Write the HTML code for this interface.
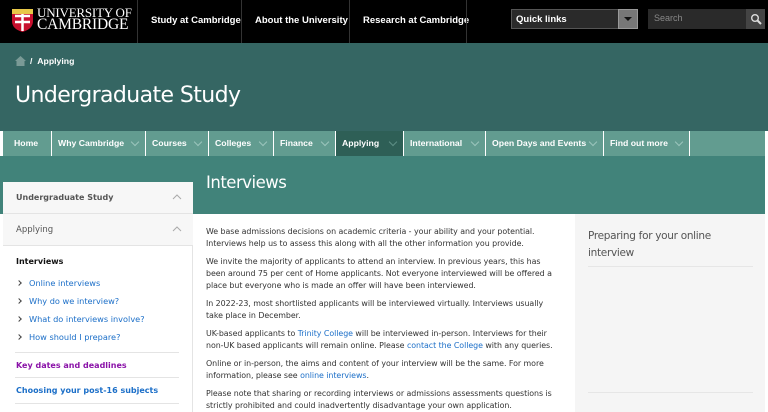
<!DOCTYPE html>
<html><head><meta charset="utf-8"><style>
*{margin:0;padding:0;box-sizing:border-box}
body{width:768px;height:412px;overflow:hidden;background:#fff;font-family:"DejaVu Sans",Verdana,sans-serif;position:relative}
.a{position:absolute}
.hdr{left:0;top:0;width:768px;height:43px;background:#000}
.tn{color:#fff;font:bold 9.5px "Liberation Sans",sans-serif;top:15px}
.sep{top:0;width:1px;height:43px;background:#333}
.band{left:0;top:43px;width:768px;height:88px;background:#356663}
.nav{top:131px;height:25px;background:#629c90;color:#fff;font:bold 8.7px "Liberation Sans",sans-serif;line-height:25px;padding-left:6px}
.nav .c{position:absolute;right:7px;top:8px;width:6px;height:6px;border-right:1px solid #9cc5bc;border-bottom:1px solid #9cc5bc;transform:rotate(45deg)}
.p{font-size:7.9px;color:#333;line-height:11.8px;white-space:nowrap;left:206px;letter-spacing:-0.05px}
.p a{color:#1c6fc8;text-decoration:none}
.sl{font-size:8.2px;white-space:nowrap}
.hr{left:15px;width:164px;height:1px;background:#e4e4e4}
.ch{display:inline-block;width:4px;height:4px;border-right:1px solid #444;border-top:1px solid #444;transform:rotate(45deg);margin:0 8px 1px 1px}
</style></head><body>
<div class="a hdr"></div>
<svg class="a" style="left:12px;top:9px" width="21" height="23" viewBox="0 0 21 23"><path d="M0 0H21V12Q21 20 10.5 23Q0 20 0 12Z" fill="#c8102e"/><rect x="0" y="0" width="21" height="5" fill="#e8c848"/><path d="M3 7H18M10.5 5V22M3 13H18" stroke="#fff" stroke-width="2.5"/></svg>
<div class="a" style="left:37px;top:7px;color:#fff;font:13px 'Liberation Serif',serif;line-height:12px;letter-spacing:-0.2px">UNIVERSITY OF<br><span style="font-size:15.5px">CAMBRIDGE</span></div>
<div class="a sep" style="left:137px"></div>
<div class="a tn" style="left:151px">Study at Cambridge</div>
<div class="a sep" style="left:241px"></div>
<div class="a tn" style="left:255px">About the University</div>
<div class="a sep" style="left:349px"></div>
<div class="a tn" style="left:363px">Research at Cambridge</div>
<div class="a sep" style="left:466px"></div>
<div class="a" style="left:511px;top:9px;width:123px;height:20px;background:#2a2a2a;border:1px solid #555"></div>
<div class="a tn" style="left:516px;top:14px">Quick links</div>
<div class="a" style="left:618px;top:9px;width:20px;height:20px;background:#777;border:1px solid #999"></div>
<div class="a" style="left:624px;top:17px;border-left:4px solid transparent;border-right:4px solid transparent;border-top:4px solid #111"></div>
<div class="a" style="left:648px;top:9px;width:117px;height:20px;background:#2a2a2a"></div>
<div class="a" style="left:654px;top:13px;color:#888;font:9px 'Liberation Sans',sans-serif">Search</div>
<div class="a" style="left:746px;top:9px;width:19px;height:20px;background:#444"></div>
<svg class="a" style="left:750px;top:13px" width="12" height="12"><circle cx="5" cy="5" r="3.3" stroke="#ddd" stroke-width="1.4" fill="none"/><path d="M7.5 7.5L11 11" stroke="#ddd" stroke-width="2"/></svg>
<div class="a band"></div>
<svg class="a" style="left:15px;top:56px" width="11" height="10"><path d="M5.5 0L11 5H9.5V10H1.5V5H0Z" fill="#7a9a96"/></svg>
<div class="a" style="left:30px;top:56px;color:#fff;font:bold 8.7px 'Liberation Sans',sans-serif">/ &nbsp;Applying</div>
<div class="a" style="left:15px;top:83px;color:#fff;font:22px 'DejaVu Sans',sans-serif;letter-spacing:-0.6px">Undergraduate Study</div>
<div class="a nav" style="left:3px;width:48px;padding-left:11px">Home</div>
<div class="a nav" style="left:52px;width:93px">Why Cambridge<i class="c"></i></div>
<div class="a nav" style="left:146px;width:62px">Courses<i class="c"></i></div>
<div class="a nav" style="left:209px;width:64px">Colleges<i class="c"></i></div>
<div class="a nav" style="left:274px;width:61px">Finance<i class="c"></i></div>
<div class="a nav" style="left:336px;width:67px;background:#2e5f56">Applying<i class="c" style="border-color:#5e8f86"></i></div>
<div class="a nav" style="left:404px;width:81px">International<i class="c"></i></div>
<div class="a nav" style="left:486px;width:117px">Open Days and Events<i class="c"></i></div>
<div class="a nav" style="left:604px;width:85px">Find out more<i class="c"></i></div>
<div class="a nav" style="left:690px;width:75px"></div>
<div class="a" style="left:0;top:156px;width:765px;height:58px;background:#41837a"></div>
<div class="a" style="left:206px;top:173px;color:#fff;font:16.5px 'DejaVu Sans',sans-serif;letter-spacing:-0.5px">Interviews</div>
<div class="a" style="left:575px;top:214px;width:190px;height:198px;background:#f5f5f5"></div>
<div class="a" style="left:588px;top:228px;color:#555;font-size:10.5px;line-height:16.5px;letter-spacing:-0.3px">Preparing for your online<br>interview</div>
<div class="a" style="left:588px;top:266px;width:165px;height:1px;background:#e6e6e6"></div>
<div class="a" style="left:588px;top:392px;width:165px;height:1px;background:#e6e6e6"></div>
<!-- sidebar -->
<div class="a" style="left:3px;top:182px;width:190px;height:230px;background:#fff;border-right:1px solid #e4e4e4"></div>
<div class="a" style="left:3px;top:182px;width:190px;height:32px;background:#f7f7f7;border-bottom:1px solid #e4e4e4"></div>
<div class="a" style="left:3px;top:214px;width:190px;height:32px;background:#f7f7f7;border-bottom:1px solid #e4e4e4"></div>
<div class="a sl" style="left:16px;top:193px;color:#555;font-weight:bold;font-size:8px">Undergraduate Study</div>
<div class="a sl" style="left:16px;top:225px;color:#555;font-size:8.5px">Applying</div>
<svg class="a" style="left:172px;top:194px" width="10" height="6"><path d="M1 5L5 1L9 5" stroke="#aaa" fill="none"/></svg>
<svg class="a" style="left:172px;top:226px" width="10" height="6"><path d="M1 5L5 1L9 5" stroke="#aaa" fill="none"/></svg>
<div class="a sl" style="left:16px;top:257px;color:#111;font-weight:bold;font-size:8px">Interviews</div>
<div class="a sl" style="left:16px;top:278px;color:#1c6fc8"><i class="ch"></i>Online interviews</div>
<div class="a sl" style="left:16px;top:296px;color:#1c6fc8"><i class="ch"></i>Why do we interview?</div>
<div class="a sl" style="left:16px;top:314px;color:#1c6fc8"><i class="ch"></i>What do interviews involve?</div>
<div class="a sl" style="left:16px;top:332px;color:#1c6fc8"><i class="ch"></i>How should I prepare?</div>
<div class="a hr" style="top:352px"></div>
<div class="a sl" style="left:16px;top:361px;color:#8a12a8;font-weight:bold;font-size:8px">Key dates and deadlines</div>
<div class="a hr" style="top:377px"></div>
<div class="a sl" style="left:16px;top:386px;color:#1c6fc8;font-weight:bold;font-size:8px">Choosing your post-16 subjects</div>
<div class="a hr" style="top:403px"></div>
<!-- body -->
<div class="a p" style="top:226px">We base admissions decisions on academic criteria - your ability and your potential.<br>Interviews help us to assess this along with all the other information you provide.</div>
<div class="a p" style="top:256px">We invite the majority of applicants to attend an interview. In previous years, this has<br>been around 75 per cent of Home applicants. Not everyone interviewed will be offered a<br>place but everyone who is made an offer will have been interviewed.</div>
<div class="a p" style="top:298px">In 2022-23, most shortlisted applicants will be interviewed virtually. Interviews usually<br>take place in December.</div>
<div class="a p" style="top:328px">UK-based applicants to <a>Trinity College</a> will be interviewed in-person. Interviews for their<br>non-UK based applicants will remain online. Please <a>contact the College</a> with any queries.</div>
<div class="a p" style="top:358px">Online or in-person, the aims and content of your interview will be the same. For more<br>information, please see <a>online interviews</a>.</div>
<div class="a p" style="top:388px">Please note that sharing or recording interviews or admissions assessments questions is<br>strictly prohibited and could inadvertently disadvantage your own application.</div>
</body></html>
